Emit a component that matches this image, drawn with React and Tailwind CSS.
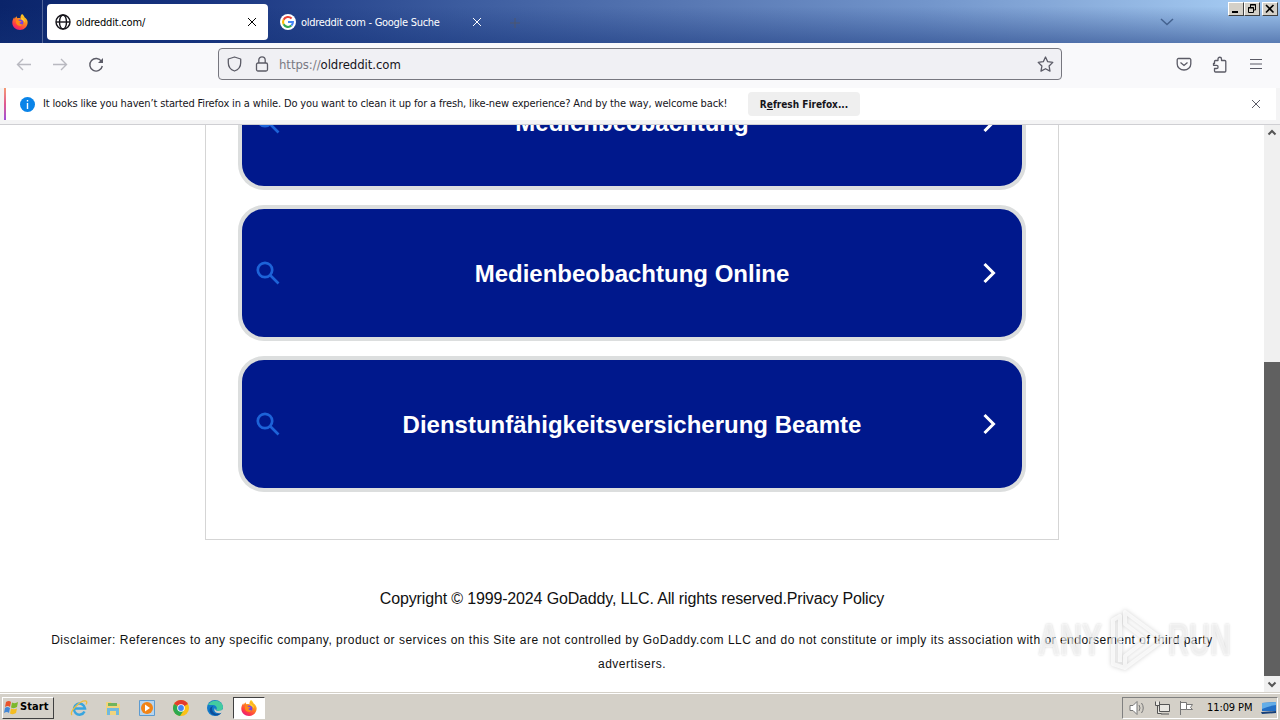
const results = ["Medienbeobachtung", "Medienbeobachtung Online", "Dienstunfähigkeitsversicherung Beamte"];

function FirefoxLogo({ size }) {
  return (
    <svg width={size} height={size} viewBox="0 0 16 16">
      <defs>
        <linearGradient id="fox" x1="0.8" y1="0" x2="0.2" y2="1">
          <stop offset="0" stopColor="#ffe226" />
          <stop offset="0.4" stopColor="#ff8a1e" />
          <stop offset="0.75" stopColor="#ff3b47" />
          <stop offset="1" stopColor="#e31587" />
        </linearGradient>
      </defs>
      <path d="M10 0c1.500 1.200 2.300 2.200 2.500 3.300C14.800 5 16 7 15.600 9.300 15 13.300 11.800 16 8 16 3.800 16 .5 13 .3 9 .2 6.800 1 4.800 2.200 3.200l.5 1.500C3.200 3.600 4 2.800 4.700 2.300c0 .9.3 1.500.8 1.900 1.300-.2 2.300 0 3 .3C8.300 2.800 8.700 1.200 10 0z" fill="url(#fox)" />
      <circle cx="8.300" cy="8.500" r="3" fill="#7542e5" />
      <path d="M4 6.500c1.300-.7 2.700-.4 3.800.5l1.800.3c-.3 1-1.300 1.300-2.100 1.300.2 1.300 1.500 1.900 3.200 1.300-.8 1.700-2.300 2.300-3.900 1.900C4.500 11.200 3.500 9 4 6.500z" fill="#ff8a16" />
      <path d="M9 3.300c2.700.9 4.300 3 4.100 5.600-.8-1.700-1.600-2.300-3-2.900C9.300 5.300 8.900 4.500 9 3.300z" fill="#ffd02c" />
    </svg>
  );
}

function GoogleLogo() {
  return (
    <svg width="16" height="16" viewBox="0 0 16 16" fill="none" strokeWidth="2.100">
      <circle cx="8" cy="8" r="8" fill="#fff" />
      <path d="M11.600 4.500A5 5 0 0 0 3.600 5.700" stroke="#ea4335" />
      <path d="M3.600 5.700a5 5 0 0 0 0 4.600" stroke="#fbbc05" />
      <path d="M3.600 10.300a5 5 0 0 0 7.800 1.300" stroke="#34a853" />
      <path d="M11.400 11.600A5 5 0 0 0 12.900 8H8" stroke="#4285f4" />
    </svg>
  );
}

function Cross({ size, className }) {
  return (
    <svg width={size} height={size} viewBox="0 0 10 10" className={className} stroke="currentColor" strokeWidth="1">
      <path d="M1 1l8 8M9 1L1 9" />
    </svg>
  );
}

function WindowButtons() {
  return (
    <div className="absolute right-[2px] top-[2px] flex text-black">
      <div className="flex h-[14px] w-4 border border-t-white border-l-white border-r-[#404040] border-b-[#404040] bg-[#d4d0c8]">
        <svg width="14" height="12"><path d="M3 8h6v2H3z" /></svg>
      </div>
      <div className="flex h-[14px] w-4 border border-t-white border-l-white border-r-[#404040] border-b-[#404040] bg-[#d4d0c8]">
        <svg width="14" height="12" fill="none" stroke="currentColor">
          <path d="M5.500 4V1.500h5V7H9M5 2h6M3.500 4.500h5v5h-5zM3 5h6" />
        </svg>
      </div>
      <div className="ml-[2px] flex h-[14px] w-4 border border-t-white border-l-white border-r-[#404040] border-b-[#404040] bg-[#d4d0c8]">
        <svg width="14" height="12" stroke="currentColor" strokeWidth="1.600"><path d="M3 2l7.500 7.500M10.500 2L3 9.500" /></svg>
      </div>
    </div>
  );
}

function TabBar() {
  return (
    <div className="relative flex h-[43px] bg-[linear-gradient(to_bottom,transparent_15%,rgba(20,50,120,0.5)),linear-gradient(95deg,#0a246a_0%,#17337f_15%,#3c5c9f_36%,#5a7ab5_55%,#7295cb_72%,#88abda_83%,#a2c8f0_96%)] text-[11px]">
      <div className="flex w-[43px] items-center justify-center border-r border-[#52669a] pr-[2px]">
        <FirefoxLogo size={16} />
      </div>
      <div className="mt-1 ml-1 flex h-9 w-[221px] items-center rounded bg-white pl-2 pr-[11px] text-black">
        <svg width="16" height="16" viewBox="0 0 16 16" fill="none" stroke="#15141a" strokeWidth="1.400">
          <circle cx="8" cy="8" r="7" />
          <ellipse cx="8" cy="8" rx="3.500" ry="7" />
          <path d="M1 8h14" />
        </svg>
        <span className="ml-[5px] pt-[2px] tracking-[-0.2px]">oldreddit.com/</span>
        <Cross size={10} className="ml-auto" />
      </div>
      <div className="mt-1 flex h-9 w-[221px] items-center pl-3 pr-[7px] text-white">
        <GoogleLogo />
        <span className="ml-[5px] whitespace-nowrap pt-[2px] tracking-[-0.29px]">oldreddit com - Google Suche</span>
        <Cross size={10} className="ml-auto" />
      </div>
      <svg width="10" height="10" className="mt-[18px] ml-[21px]" stroke="#4c566e"><path d="M5 0v10M0 5h10" /></svg>
      <svg width="14" height="8" className="mt-[18px] ml-auto mr-[106px]" fill="none" stroke="#44628f" strokeWidth="1.500"><path d="M1 1l6 5.500L13 1" /></svg>
      <WindowButtons />
    </div>
  );
}

function NavBar() {
  return (
    <div className="flex h-[45px] items-center bg-[#f9f9fb] pb-[3px] pr-4 text-[#5b5b66]">
      <svg width="100" height="20" className="ml-2" fill="none" stroke="#b9b9c0" strokeWidth="1.400">
        <path d="M23 10.500H9.500M15 5L9.500 10.500 15 16M45 10.500h13.500M53 5l5.500 5.500L53 16" />
        <path d="M93.500 7.500A6.300 6.300 0 1 0 94.300 12" stroke="#5b5b66" />
        <path d="M95 4v5h-5z" fill="#5b5b66" stroke="none" />
      </svg>
      <div className="ml-[110px] flex h-8 w-[844px] items-center rounded border border-[#77777f] bg-[#f0f0f4] pl-2 pr-[7px]">
        <svg width="15" height="16" fill="none" stroke="currentColor" strokeWidth="1.300"><path d="M7.500 1L13.700 3v3.700c0 4-2.500 7-6.200 8.300C3.800 13.700 1.300 10.700 1.300 6.700V3z" strokeLinejoin="round" /></svg>
        <svg width="14" height="16" className="ml-[13px]" fill="none" stroke="currentColor" strokeWidth="1.300">
          <rect x="1.500" y="7" width="11" height="8" rx="1.500" />
          <path d="M3.800 7V4a3.200 3.200 0 0 1 6.400 0v3" />
        </svg>
        <span className="ml-[10px] pt-px text-[13px] tracking-[-0.05px] text-[#7a7a83]">https://<span className="text-[#15141a]">oldreddit.com</span></span>
        <svg width="17" height="16" className="ml-auto" viewBox="0 0 17 16" fill="none" stroke="currentColor" strokeWidth="1.300" strokeLinejoin="round"><path d="M8.500 1l2.200 4.700 5.100.7-3.700 3.600.9 5.100-4.500-2.400L4 15.100l.9-5.100-3.700-3.600 5.100-.7z" /></svg>
      </div>
      <svg width="16" height="16" className="ml-auto" fill="none" stroke="currentColor" strokeWidth="1.300">
        <path d="M2.500 2.500h11a1.300 1.300 0 0 1 1.300 1.300V8A6.800 6 0 0 1 1.200 8V3.800a1.300 1.300 0 0 1 1.300-1.300zM4.500 6.500L8 9.500l3.500-3" />
      </svg>
      <svg width="16" height="17" className="ml-5" fill="none" stroke="currentColor" strokeWidth="1.300" strokeLinejoin="round">
        <path d="M6 4.500V3a1.700 1.700 0 0 1 3.500 0v1.500h3.300a1 1 0 0 1 1 1V15a1 1 0 0 1-1 1H3.500a1 1 0 0 1-1-1v-2.500h2a1.600 1.600 0 0 0 0-3.200h-3V7.500h1v-2a1 1 0 0 1 1-1z" />
      </svg>
      <svg width="14" height="12" className="ml-[21px] mr-[1px] mb-px" stroke="currentColor" strokeWidth="1.200"><path d="M1 1.500h12M1 6h12M1 10.500h12" /></svg>
    </div>
  );
}

function Notification() {
  return (
    <div className="flex h-[37px] flex-col border-b border-[#cfcfd3] bg-[#f4f4f5] px-1">
      <div className="flex h-8 items-center bg-white pr-[15px] text-[11px] text-[#15141a]">
        <div className="h-full w-[2px] bg-linear-to-b from-[#f59a72] via-[#e0588f] to-[#a04bd8]"></div>
        <svg width="15" height="15" className="ml-[14px]"><circle cx="7.500" cy="7.500" r="7.500" fill="#0a84e8" /><path d="M7.500 3v1.500M7.500 6v6" stroke="#fff" strokeWidth="1.400" /></svg>
        <span className="ml-2 w-[684px] whitespace-nowrap tracking-[-0.146px]">It looks like you haven’t started Firefox in a while. Do you want to clean it up for a fresh, like-new experience? And by the way, welcome back!</span>
        <button className="ml-[21px] h-6 w-[112px] whitespace-nowrap rounded bg-[#efefef] font-bold text-[10px]">R<u>e</u>fresh Firefox...</button>
        <Cross size={10} className="ml-auto text-[#5b5b66]" />
      </div>
    </div>
  );
}

function ResultCard({ title }) {
  return (
    <div className="flex h-[136px] w-[788px] shrink-0 items-center rounded-[26px] border-4 border-[#dcdede] bg-[#00188c] pl-[14px] pr-[26px]">
      <svg width="24" height="24" fill="none" stroke="#1d63d8" strokeWidth="2.700"><circle cx="9" cy="9" r="7.200" /><path d="M14 14l8.500 8.500" /></svg>
      <span className="flex-1 pl-[1px] pt-[2px] text-center text-2xl font-bold text-white">{title}</span>
      <svg width="13" height="22" fill="none" stroke="#fff" strokeWidth="3"><path d="M1.500 2l9 9-9 9" /></svg>
    </div>
  );
}

function Watermark() {
  return (
    <div className="absolute left-[1038px] top-[483px] flex h-[64px] w-[200px] items-center text-[44px] font-bold text-white/60 [text-shadow:0_0_3px_rgba(0,0,0,0.18)]">
      <span className="w-[70px] origin-left scale-x-[0.69]">ANY</span>
      <svg width="60" height="64" fill="none" stroke="#fff" strokeOpacity="0.7" strokeWidth="4" strokeLinejoin="round" className="[filter:drop-shadow(0_0_2px_rgba(0,0,0,0.25))]">
        <path d="M17 4l38 28-38 28V48l21-16-21-16zM17 60L5 56V12l7-4v46" />
      </svg>
      <span className="w-[70px] origin-left scale-x-[0.66]">RUN</span>
    </div>
  );
}

function Page() {
  return (
    <div className="relative flex h-[567px] overflow-hidden bg-white font-['Liberation_Sans',Arial,sans-serif] text-[#111]">
      <div className="flex flex-1 flex-col items-center">
        <div className="flex h-[415px] w-[854px] shrink-0 flex-col items-center justify-end gap-[15px] border border-t-0 border-[#d5d5d5] pb-[47px]">
          {results.map((title) => <ResultCard key={title} title={title} />)}
        </div>
        <p className="mt-[47px] text-base tracking-[-0.15px]">Copyright © 1999-2024 GoDaddy, LLC. All rights reserved.<span>Privacy Policy</span></p>
        <p className="mt-[17px] w-[1180px] text-center text-xs leading-6 tracking-[0.495px]">Disclaimer: References to any specific company, product or services on this Site are not controlled by GoDaddy.com LLC and do not constitute or imply its association with or endorsement of third party advertisers.</p>
      </div>
      <div className="flex w-4 flex-col items-center bg-[#f0f0f0]">
        <svg width="16" height="16" fill="none" stroke="#555" strokeWidth="2"><path d="M4.500 9.500L8 6l3.500 3.500" /></svg>
        <div className="mt-[221px] h-[314px] w-4 bg-[#606060]"></div>
        <svg width="16" height="16" fill="none" stroke="#555" strokeWidth="2"><path d="M4.500 6.500L8 10l3.500-3.500" /></svg>
      </div>
      <Watermark />
    </div>
  );
}

function Taskbar() {
  return (
    <div className="flex h-7 items-center border-t border-[#d4d0c8] bg-[#d4d0c8] pl-[2px] pr-[2px] pt-[2px] text-black shadow-[inset_0_1px_0_#fff]">
      <button className="flex h-[22px] w-[52px] items-center border border-t-white border-l-white border-r-[#404040] border-b-[#404040] pl-[1px] text-[11px] font-bold">
        <svg width="16" height="15">
          <path d="M2 2q3-2 5 0L6 7Q4 5 1 7z" fill="#e9532b" />
          <path d="M8 2.500q3 1.500 6-.5L13 7q-3 2-6 .5z" fill="#7cb82c" />
          <path d="M1 8q2-2 5 0l-1 5Q3 11 0 13z" fill="#4387d6" />
          <path d="M7 8.500q3 1.500 6 0L12 13q-3 2-6 .5z" fill="#f5bd21" />
        </svg>
        <span className="whitespace-nowrap tracking-[0.1px]">Start</span>
      </button>
      <svg width="18" height="18" className="ml-[16px]" fill="none">
        <path d="M14.500 12.500A5.500 5.500 0 1 1 15 9.500H5" stroke="#38a5df" strokeWidth="2.500" />
        <path d="M2 16C-1 13 10 1 16 2q1.500 1 0 3.500" stroke="#edbd3c" strokeWidth="1.300" />
      </svg>
      <svg width="16" height="16" className="ml-[17px]">
        <path d="M1 2h5l1 2h8v11H1z" fill="#f1d47d" />
        <path d="M3 3h9v3H3z" fill="#70b45c" />
        <path d="M2 15V8h12v7h-3v-4H5v4z" fill="#71b9df" />
      </svg>
      <svg width="16" height="16" className="ml-[18px]">
        <path d="M.5.500h15v15H.5z" fill="#b7d5ef" stroke="#5d9bd0" />
        <circle cx="8" cy="8" r="6" fill="#f28416" />
        <path d="M6 4.500l5 3.500-5 3.500z" fill="#fff" />
      </svg>
      <svg width="16" height="16" className="ml-[18px]" viewBox="0 0 16 16">
        <circle cx="8" cy="8" r="8" fill="#fbc116" />
        <path d="M8 8L1.100 4A8 8 0 0 1 14.900 4z" fill="#e33b2e" />
        <path d="M8 8L1.100 4A8 8 0 0 0 7 16l4-6z" fill="#2da94f" />
        <circle cx="8" cy="8" r="3.800" fill="#fff" />
        <circle cx="8" cy="8" r="2.900" fill="#4285f4" />
      </svg>
      <svg width="16" height="16" className="ml-[18px]" viewBox="0 0 16 16">
        <circle cx="8" cy="8" r="8" fill="#137bc9" />
        <path d="M1 5C4-1 15-1 16 7c0 4-4 5-7 3 2-2 0-5-3-5-2 0-4 0-5 0z" fill="#43cba0" />
        <path d="M5 8c0 5 4 7 9 5-3 4-9 3-11-1-1-3 0-5 3-6z" fill="#0c4e9b" />
        <path d="M8 8c0 3 3 4 7 2l1-1v3l-2 1c-5 1-8-2-6-5z" fill="#d4d0c8" />
      </svg>
      <div className="ml-[10px] flex h-[22px] w-8 items-center justify-center border border-t-[#404040] border-l-[#404040] border-r-white border-b-white bg-white">
        <FirefoxLogo size={16} />
      </div>
      <div className="ml-auto flex h-[22px] w-[156px] items-center border border-t-[#808080] border-l-[#808080] border-r-white border-b-white pl-[6px] text-[11px]">
        <svg width="17" height="16" fill="#fff" stroke="#777"><path d="M1 5.500h3l4-4v13l-4-4H1z" /><path d="M10 5q2 3 0 6M12.500 3q3.500 5 0 10" fill="none" /></svg>
        <svg width="17" height="16" className="ml-2" fill="#e9e7e2" stroke="#555"><path d="M5.500 4.500h10v7h-10zM7 14h8M1.500 1.500v4h4v-4M3.500 5.500v8h4" /></svg>
        <svg width="17" height="16" className="ml-[7px]" fill="#fff" stroke="#777"><path d="M2.500 1v14M2.500 2.500h6v7h-6M8.500 4.500h6l-2 3 2 2h-6" /></svg>
        <span className="ml-3 whitespace-nowrap pt-px tracking-[-0.1px]">11:09 PM</span>
        <svg width="16" height="14" className="ml-auto"><path d="M1 2l14-1v9H1z" fill="#246fc5" /><path d="M1 2l14-1v3Q7 5 1 8z" fill="#65aee8" /><path d="M0 11l15-1v2L1 13z" fill="#163f78" /></svg>
      </div>
    </div>
  );
}

function App() {
  return (
    <div className="h-[720px] w-[1280px] overflow-hidden bg-white font-['DejaVu_Sans_Condensed','DejaVu_Sans',sans-serif] [font-stretch:condensed]">
      <TabBar />
      <NavBar />
      <Notification />
      <Page />
      <Taskbar />
    </div>
  );
}

export default App;
